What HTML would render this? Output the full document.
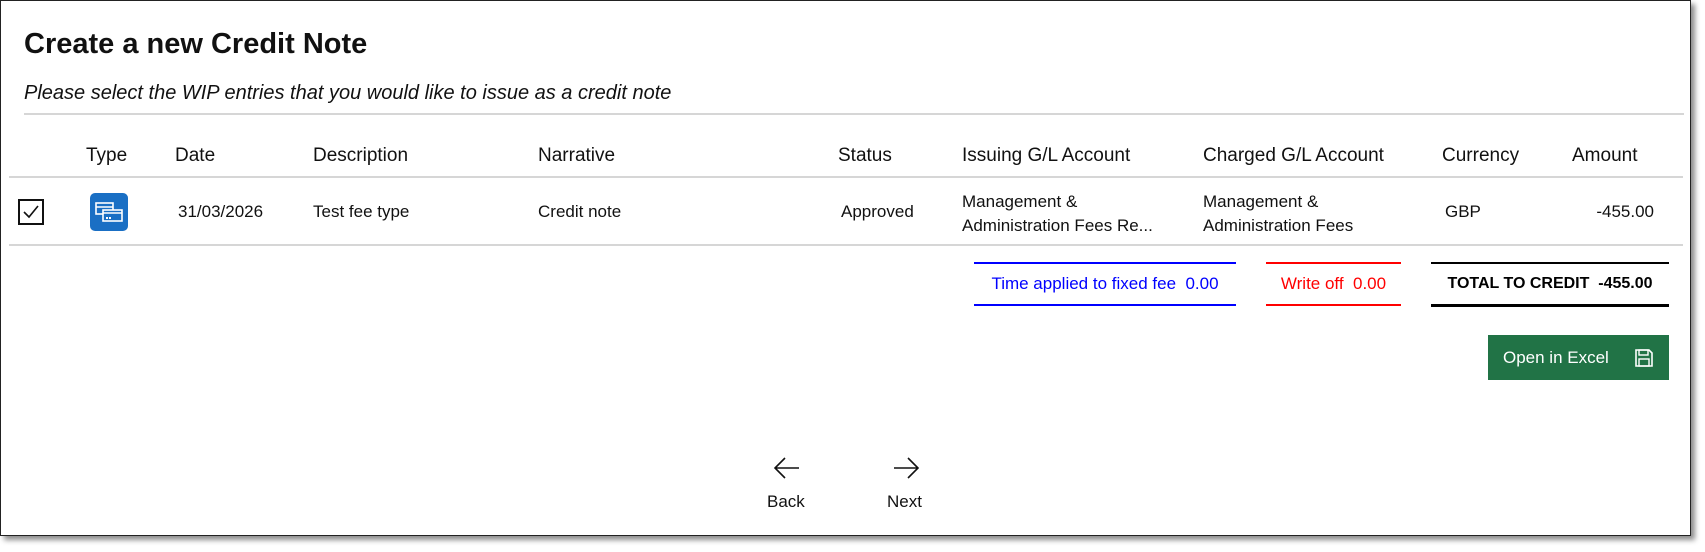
<!DOCTYPE html>
<html><head><style>
body{margin:0;width:1705px;height:552px;background:#fff;font-family:"Liberation Sans",sans-serif;position:relative;overflow:hidden}
.frame{position:absolute;left:0;top:0;width:1689px;height:534px;border:1px solid #222;box-shadow:4px 4px 5px rgba(0,0,0,.45);background:#fff}
.a{position:absolute;white-space:nowrap}
.h{font-size:19px;color:#111;top:145px}
.d{font-size:17px;color:#111}
.hr{position:absolute;left:9px;width:1674px;height:2px;background:#d6d6d6}
</style></head><body>
<div class="frame"></div>
<div class="a" style="left:24px;top:28px;font-size:29px;font-weight:bold;color:#111">Create a new Credit Note</div>
<div class="a" style="left:24px;top:82px;font-size:20px;font-style:italic;color:#111">Please select the WIP entries that you would like to issue as a credit note</div>
<div class="hr" style="left:24px;width:1660px;top:113px"></div>
<div class="a h" style="left:86px">Type</div>
<div class="a h" style="left:175px">Date</div>
<div class="a h" style="left:313px">Description</div>
<div class="a h" style="left:538px">Narrative</div>
<div class="a h" style="left:838px">Status</div>
<div class="a h" style="left:962px">Issuing G/L Account</div>
<div class="a h" style="left:1203px">Charged G/L Account</div>
<div class="a h" style="left:1442px">Currency</div>
<div class="a h" style="left:1572px">Amount</div>
<div class="hr" style="top:176px"></div>
<div class="a" style="left:18px;top:199px;width:22px;height:22px;border:2px solid #111"></div>
<svg class="a" style="left:19px;top:200px" width="24" height="24"><path d="M5 12 L10 17 L19 6" fill="none" stroke="#111" stroke-width="1.6"/></svg>
<div class="a" style="left:90px;top:193px;width:38px;height:38px;background:#1a6fc4;border-radius:5px"></div>
<svg class="a" style="left:90px;top:193px" width="38" height="38"><rect x="6" y="10" width="17" height="11" fill="none" stroke="#fff" stroke-width="1.6"/><line x1="6" y1="14" x2="23" y2="14" stroke="#fff" stroke-width="1.5"/><rect x="13" y="17" width="19" height="11" fill="#1a6fc4" stroke="#fff" stroke-width="1.6"/><line x1="13" y1="20" x2="32" y2="20" stroke="#fff" stroke-width="1.5"/><rect x="16" y="24" width="2" height="2" fill="#fff"/><rect x="19" y="24" width="2" height="2" fill="#fff"/></svg>
<div class="a d" style="left:178px;top:202px">31/03/2026</div>
<div class="a d" style="left:313px;top:202px">Test fee type</div>
<div class="a d" style="left:538px;top:202px">Credit note</div>
<div class="a d" style="left:841px;top:202px">Approved</div>
<div class="a d" style="left:962px;top:190px;line-height:24px">Management &amp;<br>Administration Fees Re...</div>
<div class="a d" style="left:1203px;top:190px;line-height:24px">Management &amp;<br>Administration Fees</div>
<div class="a d" style="left:1445px;top:202px">GBP</div>
<div class="a d" style="right:51px;top:202px">-455.00</div>
<div class="hr" style="top:244px"></div>
<div class="a" style="left:974px;top:262px;width:262px;height:40px;border-top:2px solid #00f;border-bottom:2px solid #00f;color:#00f;font-size:17px;text-align:center;line-height:40px">Time applied to fixed fee&nbsp;&nbsp;0.00</div>
<div class="a" style="left:1266px;top:262px;width:135px;height:40px;border-top:2px solid #f00;border-bottom:2px solid #f00;color:#f00;font-size:17px;text-align:center;line-height:40px">Write off&nbsp;&nbsp;0.00</div>
<div class="a" style="left:1431px;top:262px;width:238px;height:40px;border-top:2px solid #000;border-bottom:3px solid #000;color:#000;font-size:16px;font-weight:bold;text-align:center;line-height:40px">TOTAL TO CREDIT&nbsp;&nbsp;-455.00</div>
<div class="a" style="left:1488px;top:335px;width:181px;height:45px;background:#217346;color:#fff;font-size:17px;line-height:45px;padding-left:15px;box-sizing:border-box">Open in Excel</div>
<svg class="a" style="left:1634px;top:348px" width="20" height="20"><path d="M2 2 H15 L18 5 V18 H2 Z" fill="none" stroke="#fff" stroke-width="1.6"/><rect x="5" y="2" width="9" height="5" fill="none" stroke="#fff" stroke-width="1.4"/><rect x="5" y="11" width="10" height="7" fill="none" stroke="#fff" stroke-width="1.4"/></svg>
<svg class="a" style="left:772px;top:455px" width="30" height="26"><path d="M27 13 H3 M13 3 L3 13 L13 23" fill="none" stroke="#111" stroke-width="1.6"/></svg>
<div class="a" style="left:767px;top:492px;font-size:17px;color:#111">Back</div>
<svg class="a" style="left:891px;top:455px" width="30" height="26"><path d="M3 13 H27 M17 3 L27 13 L17 23" fill="none" stroke="#111" stroke-width="1.6"/></svg>
<div class="a" style="left:887px;top:492px;font-size:17px;color:#111">Next</div>
</body></html>
